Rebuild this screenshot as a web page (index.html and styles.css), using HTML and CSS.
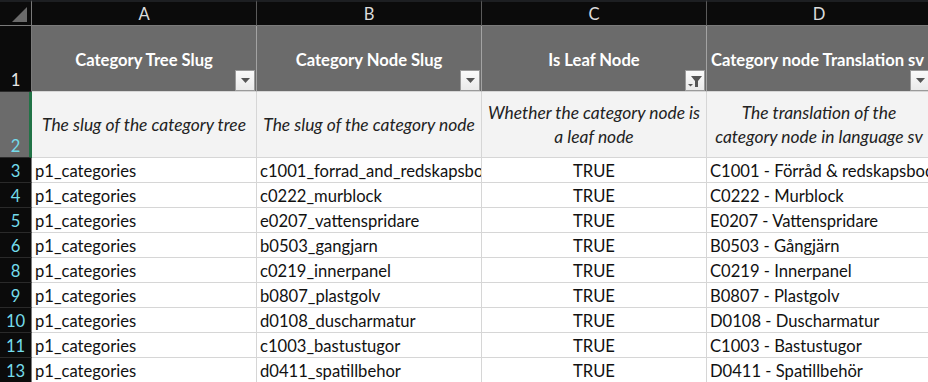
FILE: index.html
```html
<!DOCTYPE html>
<html lang="en">
<head>
    <meta charset="UTF-8">
    <title>Category Nodes</title>
    <link rel="stylesheet" href="styles.css">
</head>
<body>

    <div class="sheet">
        <!-- column letters -->
        <div class="corner"><span class="corner-mark"></span></div>
        <div class="col-head">A</div>
        <div class="col-head">B</div>
        <div class="col-head">C</div>
        <div class="col-head">D</div>

        <!-- row 1: table headers -->
        <div class="row-head row-head-plain">1</div>
        <div class="cell title">
            <span class="title-text">Category Tree Slug</span>
            <span class="filter-btn"><svg width="9" height="5" viewBox="0 0 9 5"><path d="M0 0h9L4.5 5z" fill="#555"/></svg></span>
        </div>
        <div class="cell title">
            <span class="title-text">Category Node Slug</span>
            <span class="filter-btn"><svg width="9" height="5" viewBox="0 0 9 5"><path d="M0 0h9L4.5 5z" fill="#555"/></svg></span>
        </div>
        <div class="cell title">
            <span class="title-text">Is Leaf Node</span>
            <span class="filter-btn"><svg width="16" height="16" viewBox="0 0 16 16"><path d="M4 3h11L11 8v6H8V8z" fill="#555"/><path d="M1 11h5l-2.5 2.5z" fill="#555"/></svg></span>
        </div>
        <div class="cell title title-wide">
            <span class="title-text">Category node Translation sv</span>
            <span class="filter-btn"><svg width="9" height="5" viewBox="0 0 9 5"><path d="M0 0h9L4.5 5z" fill="#555"/></svg></span>
        </div>

        <!-- row 2: descriptions -->
        <div class="row-head row-head-active">2</div>
        <div class="cell desc">The slug of the category tree</div>
        <div class="cell desc">The slug of the category node</div>
        <div class="cell desc">Whether the category node is a leaf node</div>
        <div class="cell desc">The translation of the<br>category node in language sv</div>

        <div class="row-head">3</div>
        <div class="cell">p1_categories</div>
        <div class="cell">c1001_forrad_and_redskapsbod</div>
        <div class="cell center">TRUE</div>
        <div class="cell">C1001 - Förråd &amp; redskapsbod</div>

        <div class="row-head">4</div>
        <div class="cell">p1_categories</div>
        <div class="cell">c0222_murblock</div>
        <div class="cell center">TRUE</div>
        <div class="cell">C0222 - Murblock</div>

        <div class="row-head">5</div>
        <div class="cell">p1_categories</div>
        <div class="cell">e0207_vattenspridare</div>
        <div class="cell center">TRUE</div>
        <div class="cell">E0207 - Vattenspridare</div>

        <div class="row-head">6</div>
        <div class="cell">p1_categories</div>
        <div class="cell">b0503_gangjarn</div>
        <div class="cell center">TRUE</div>
        <div class="cell">B0503 - Gångjärn</div>

        <div class="row-head">8</div>
        <div class="cell">p1_categories</div>
        <div class="cell">c0219_innerpanel</div>
        <div class="cell center">TRUE</div>
        <div class="cell">C0219 - Innerpanel</div>

        <div class="row-head">9</div>
        <div class="cell">p1_categories</div>
        <div class="cell">b0807_plastgolv</div>
        <div class="cell center">TRUE</div>
        <div class="cell">B0807 - Plastgolv</div>

        <div class="row-head">10</div>
        <div class="cell">p1_categories</div>
        <div class="cell">d0108_duscharmatur</div>
        <div class="cell center">TRUE</div>
        <div class="cell">D0108 - Duscharmatur</div>

        <div class="row-head">11</div>
        <div class="cell">p1_categories</div>
        <div class="cell">c1003_bastustugor</div>
        <div class="cell center">TRUE</div>
        <div class="cell">C1003 - Bastustugor</div>

        <div class="row-head">13</div>
        <div class="cell">p1_categories</div>
        <div class="cell">d0411_spatillbehor</div>
        <div class="cell center">TRUE</div>
        <div class="cell">D0411 - Spatillbehör</div>
    </div>

</body>
</html>
```

FILE: styles.css
```css
body {
    margin: 0;
    padding: 0;
    background: #0b0b0b;
    font-family: Lato, "Open Sans", sans-serif;
    font-size: 16.6px;
    overflow: hidden;
}

.sheet {
    display: grid;
    grid-template-columns: 32px repeat(4, 225px);
    grid-template-rows: 26px 66px 66px repeat(9, 25px);
    width: 932px;
}

.corner,
.col-head,
.row-head,
.cell {
    box-sizing: border-box;
    overflow: hidden;
    white-space: nowrap;
}

.corner {
    background: #0b0b0b;
    border-top: 2px solid #1d1f22;
    border-right: 1px solid #7a7a7a;
    border-bottom: 1px solid #7a7a7a;
    display: flex;
    justify-content: flex-end;
    align-items: flex-end;
    padding: 0 4px 3px 0;
}

.corner-mark {
    width: 0;
    height: 0;
    border-left: 15px solid transparent;
    border-bottom: 15px solid #6b6b6b;
}

.col-head {
    background: #0b0b0b;
    border-top: 2px solid #1d1f22;
    border-right: 1px solid #5a5a5a;
    border-bottom: 1px solid #7a7a7a;
    color: #dcdcdc;
    display: flex;
    justify-content: center;
    align-items: center;
    padding-top: 1px;
}

.row-head {
    background: #0b0b0b;
    border-right: 1px solid #7a7a7a;
    border-bottom: 1px solid #2a2a2a;
    color: #74dceb;
    display: flex;
    justify-content: center;
    align-items: flex-end;
    padding-bottom: 1px;
}

.row-head-plain {
    color: #e6e6e6;
}

.row-head-active {
    background: #6b6b6b;
    border-right: 3px solid #217346;
    padding-left: 2px;
}

.cell {
    background: #ffffff;
    border-right: 1px solid #d6d6d6;
    border-bottom: 1px solid #d6d6d6;
    color: #111111;
    display: flex;
    align-items: center;
    padding: 1px 3px 0 3px;
}

.center {
    justify-content: center;
}

.title {
    position: relative;
    background: #6b6b6b;
    border-right: 1px solid #a3a3a3;
    border-bottom: 1px solid #d6d6d6;
    color: #ffffff;
    font-weight: bold;
    justify-content: center;
    padding: 2px 0 0 0;
}

.title-wide .title-text {
    margin-left: -3px;
}

.filter-btn {
    position: absolute;
    right: 1px;
    bottom: 0;
    width: 20px;
    height: 21px;
    box-sizing: border-box;
    background: linear-gradient(#fafafa, #e9e9e9);
    border: 1px solid #9a9a9a;
    display: flex;
    justify-content: center;
    align-items: center;
}

.desc {
    background: #f3f3f3;
    font-size: 17.4px;
    font-style: italic;
    color: #222222;
    justify-content: center;
    text-align: center;
    white-space: normal;
    line-height: 24px;
    padding: 0 2px;
}
```
